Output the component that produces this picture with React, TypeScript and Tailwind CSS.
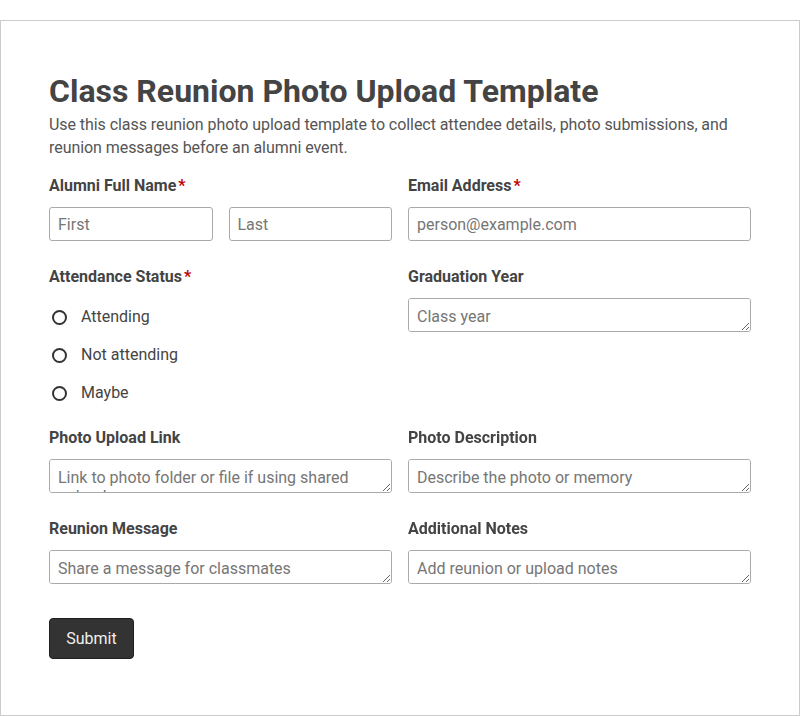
import React from "react";

const inputCls =
  "block w-full h-[34px] rounded-[3px] border border-[#aaaaaa] bg-white px-2 text-base text-[#444] placeholder:text-[#767676] outline-none";
const textareaCls =
  "block w-full h-[34px] min-h-[34px] rounded-[3px] border border-[#aaaaaa] bg-white px-2 py-2 text-base leading-[19px] text-[#444] placeholder:text-[#767676] outline-none resize-y";

function Label({ text, required }: { text: string; required?: boolean }) {
  return (
    <div className="pt-px h-[25px] leading-6 mb-[9px] text-base font-bold text-[#444]">
      {text}
      {required && <span className="ml-[2px] text-[#c00000]">*</span>}
    </div>
  );
}

function Radio({ label }: { label: string }) {
  return (
    <label className="flex h-6 items-center gap-[14px] text-base text-[#444]">
      <input
        type="radio"
        name="attendance"
        className="ml-[3px] h-[15px] w-[15px] appearance-none rounded-full border-2 border-[#333] bg-white"
      />
      <span>{label}</span>
    </label>
  );
}

export default function App() {
  return (
    <div
      className="bg-white pt-5"
      style={{ fontFamily: "Roboto, 'Liberation Sans', sans-serif" }}
    >
      <div className="border border-[#cccccc] px-12 pt-[51px] pb-[56px]">
        <h1 className="text-[32px] leading-[38px] font-bold text-[#444]">
          Class Reunion Photo Upload Template
        </h1>
        <p className="mt-[3px] text-base leading-[23px] tracking-[-0.06px] text-[#555]">
          Use this class reunion photo upload template to collect attendee details, photo
          submissions, and reunion messages before an alumni event.
        </p>
        <div className="mt-[14px] grid grid-cols-2 gap-x-4">
          <div className="mb-[23px]">
            <Label text="Alumni Full Name" required />
            <div className="grid grid-cols-2 gap-4">
              <input className={inputCls} placeholder="First" />
              <input className={inputCls} placeholder="Last" />
            </div>
          </div>
          <div className="mb-[23px]">
            <Label text="Email Address" required />
            <input className={inputCls} placeholder="person@example.com" />
          </div>

          <div className="mb-[20px]">
            <div className="pt-px h-[25px] leading-6 text-base font-bold text-[#444]">
              Attendance Status<span className="ml-[2px] text-[#c00000]">*</span>
            </div>
            <div className="pt-[16px] flex flex-col gap-[14px]">
              <Radio label="Attending" />
              <Radio label="Not attending" />
              <Radio label="Maybe" />
            </div>
          </div>
          <div className="mb-[20px]">
            <Label text="Graduation Year" />
            <textarea rows={1} className={textareaCls} placeholder="Class year" />
          </div>

          <div className="mb-[23px]">
            <Label text="Photo Upload Link" />
            <textarea
              rows={1}
              className={textareaCls}
              placeholder="Link to photo folder or file if using shared upload"
            />
          </div>
          <div className="mb-[23px]">
            <Label text="Photo Description" />
            <textarea rows={1} className={textareaCls} placeholder="Describe the photo or memory" />
          </div>

          <div>
            <Label text="Reunion Message" />
            <textarea rows={1} className={textareaCls} placeholder="Share a message for classmates" />
          </div>
          <div>
            <Label text="Additional Notes" />
            <textarea rows={1} className={textareaCls} placeholder="Add reunion or upload notes" />
          </div>
        </div>
        <button
          type="button"
          className="mt-[34px] h-[41px] w-[85px] rounded-[4px] border border-[#1f1f1f] bg-[#333333] text-base text-[#f0f0f0]"
        >
          Submit
        </button>
      </div>
    </div>
  );
}
